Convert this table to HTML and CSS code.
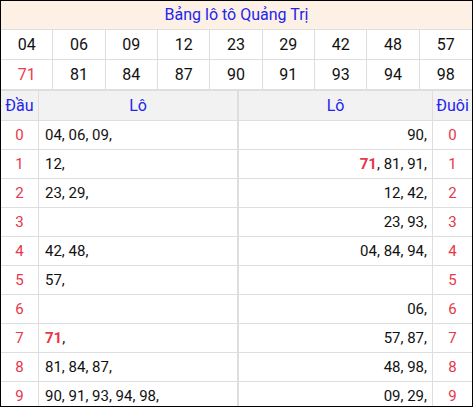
FILE: index.html
```html
<!DOCTYPE html>
<html lang="vi">
<head>
<meta charset="utf-8">
<title>Bảng lô tô Quảng Trị</title>
<link rel="stylesheet" href="styles.css">
</head>
<body>
<div class="frame">
  <div class="title">Bảng lô tô Quảng Trị</div>
  <div class="nums">
    <div class="n">04</div><div class="n">06</div><div class="n">09</div><div class="n">12</div><div class="n">23</div><div class="n">29</div><div class="n">42</div><div class="n">48</div><div class="n last">57</div>
    <div class="n red">71</div><div class="n">81</div><div class="n">84</div><div class="n">87</div><div class="n">90</div><div class="n">91</div><div class="n">93</div><div class="n">94</div><div class="n last">98</div>
  </div>
  <div class="lt">
    <div class="h c1">Đầu</div><div class="h c2">Lô</div><div class="h c3">Lô</div><div class="h c4">Đuôi</div>

    <div class="d c1">0</div><div class="v c2">04, 06, 09,</div><div class="v c3">90,</div><div class="d c4">0</div>
    <div class="d c1">1</div><div class="v c2">12,</div><div class="v c3"><b>71</b>, 81, 91,</div><div class="d c4">1</div>
    <div class="d c1">2</div><div class="v c2">23, 29,</div><div class="v c3">12, 42,</div><div class="d c4">2</div>
    <div class="d c1">3</div><div class="v c2"></div><div class="v c3">23, 93,</div><div class="d c4">3</div>
    <div class="d c1">4</div><div class="v c2">42, 48,</div><div class="v c3">04, 84, 94,</div><div class="d c4">4</div>
    <div class="d c1">5</div><div class="v c2">57,</div><div class="v c3"></div><div class="d c4">5</div>
    <div class="d c1">6</div><div class="v c2"></div><div class="v c3">06,</div><div class="d c4">6</div>
    <div class="d c1">7</div><div class="v c2"><b>71</b>,</div><div class="v c3">57, 87,</div><div class="d c4">7</div>
    <div class="d c1">8</div><div class="v c2">81, 84, 87,</div><div class="v c3">48, 98,</div><div class="d c4">8</div>
    <div class="d c1">9</div><div class="v c2">90, 91, 93, 94, 98,</div><div class="v c3">09, 29,</div><div class="d c4">9</div>
  </div>
</div>
</body>
</html>
```
FILE: styles.css
```css
html, body {
  margin: 0;
  padding: 0;
  background: #fff;
}
.frame {
  width: 473px;
  height: 407px;
  box-sizing: border-box;
  border: 1px solid #000;
  overflow: hidden;
  font-family: Roboto, "Liberation Sans", sans-serif;
  color: #111;
}
.title {
  height: 29px;
  box-sizing: border-box;
  border-bottom: 1px solid #dedede;
  background: #fdf1e6;
  color: #2424ee;
  font-size: 16px;
  line-height: 28px;
  text-align: center;
}
.nums {
  display: grid;
  grid-template-columns: repeat(9, 1fr);
}
.n {
  height: 30px;
  box-sizing: border-box;
  border-right: 1px solid #dedede;
  border-bottom: 1px solid #dedede;
  font-size: 16px;
  line-height: 29px;
  text-align: center;
}
.n.last {
  border-right: none;
}
.n.red {
  color: #f03a4c;
}
.lt {
  display: grid;
  grid-template-columns: 38px 199px 195px 39px;
  border-top: 1px solid #dedede;
}
.lt > div {
  box-sizing: border-box;
  border-bottom: 1px solid #dedede;
  white-space: nowrap;
}
.h {
  height: 30px;
  line-height: 29px;
  background: #f2f2f2;
  color: #2424ee;
  font-size: 16px;
  text-align: center;
}
.d, .v {
  height: 29px;
  line-height: 28px;
  font-size: 15px;
}
.d {
  color: #e8364a;
  text-align: center;
}
.v.c2 {
  padding-left: 6px;
}
.v.c3 {
  text-align: right;
  padding-right: 5px;
}
.c1, .c2 {
  border-right: 1px solid #dedede;
}
.c3 {
  border-left: 1px solid #dedede;
  border-right: 1px solid #dedede;
}
.v b {
  color: #e8364a;
  font-weight: bold;
}
```
